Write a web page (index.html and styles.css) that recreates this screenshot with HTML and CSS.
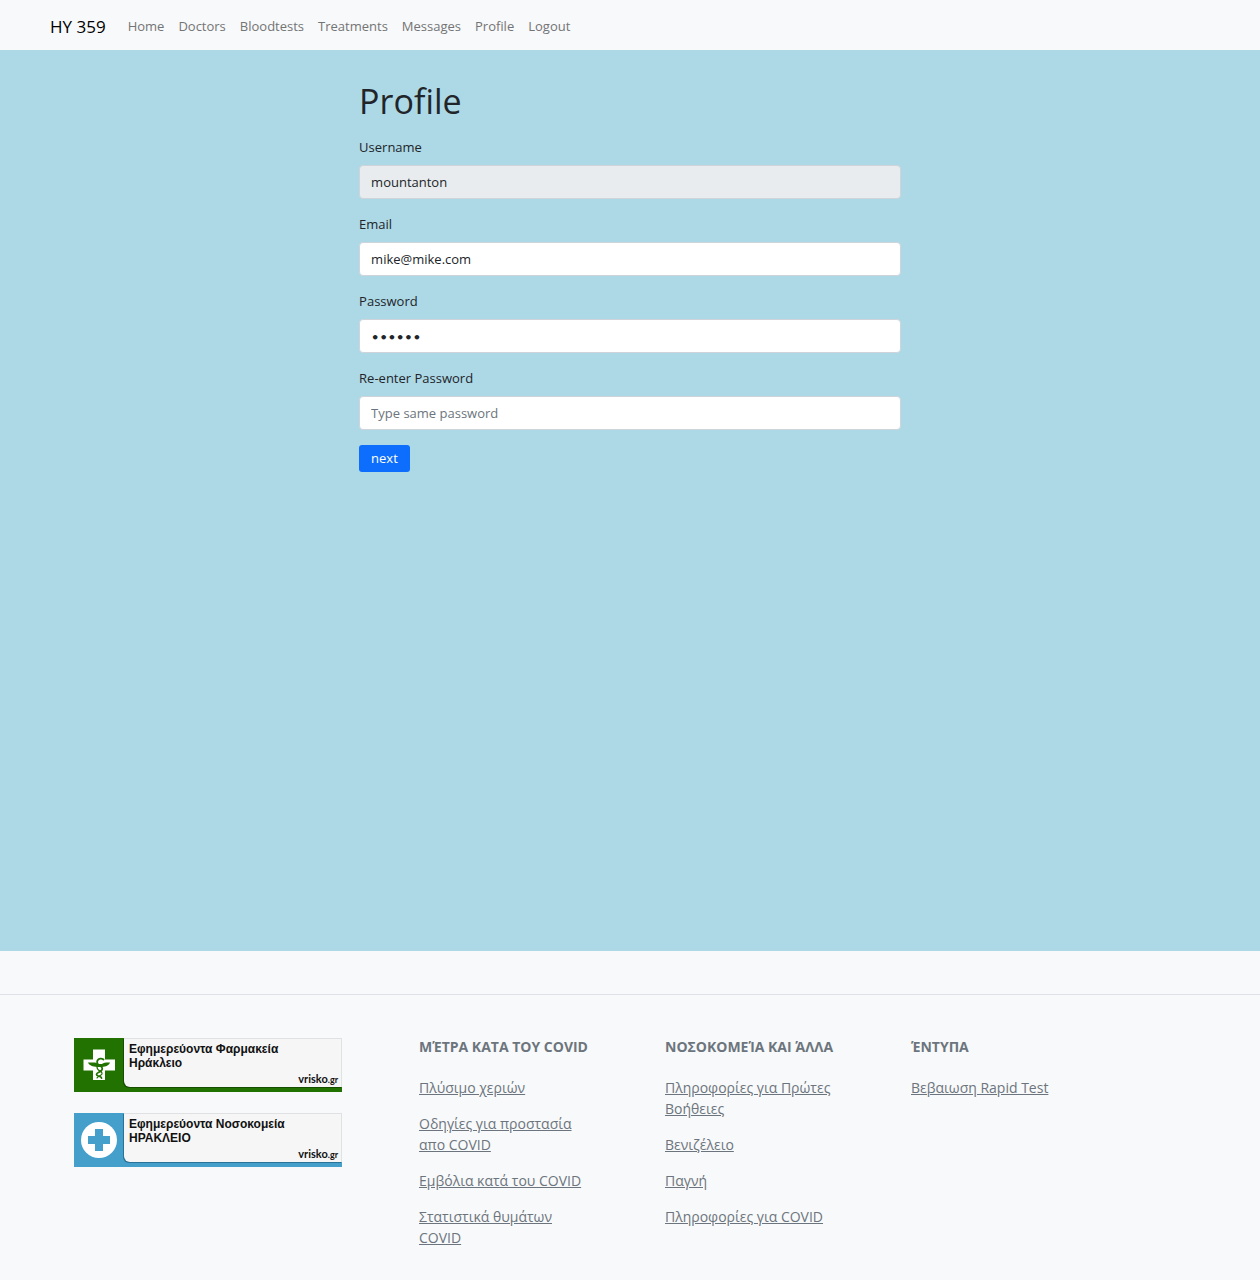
FILE: index.html
```html
<!DOCTYPE html>
<html lang="el">
<head>
  <meta charset="utf-8">
  <meta name="viewport" content="width=device-width, initial-scale=1">
  <title>Profile</title>
  <link rel="stylesheet" href="styles.css">
</head>
<body>
  <nav class="navbar">
    <a class="brand" href="#">HY 359</a>
    <ul class="nav-list">
      <li><a href="#">Home</a></li>
      <li><a href="#">Doctors</a></li>
      <li><a href="#">Bloodtests</a></li>
      <li><a href="#">Treatments</a></li>
      <li><a href="#">Messages</a></li>
      <li><a href="#">Profile</a></li>
      <li><a href="#">Logout</a></li>
    </ul>
  </nav>

  <main class="content">
    <form class="profile-form">
      <h1>Profile</h1>
      <div class="field">
        <label for="username">Username</label>
        <input id="username" type="text" value="mountanton" disabled>
      </div>
      <div class="field">
        <label for="email">Email</label>
        <input id="email" type="email" value="mike@mike.com">
      </div>
      <div class="field">
        <label for="password">Password</label>
        <input id="password" class="secret" type="password" value="secret">
      </div>
      <div class="field">
        <label for="password2">Re-enter Password</label>
        <input id="password2" type="password" placeholder="Type same password">
      </div>
      <button class="next" type="button">next</button>
    </form>
  </main>

  <footer class="footer">
    <div class="footer-grid">
      <div class="banners">
        <a class="banner pharmacy" href="#">
          <svg class="banner-icon" viewBox="0 0 50 49" aria-hidden="true">
            <path fill="#fff" d="M19 11.500h12v10h10v11h-10v9.500H19v-9.500H9.500v-11H19z"/>
            <path fill="#217200" d="M14 24.500h7c1 0 2 .5 3 1.500h4c2-1.500 5-1.800 8-1.500-1 3-4 4-8 4.500h-5c-4-.5-8-1.500-9-4.500z"/>
            <g fill="none" stroke="#217200" stroke-linecap="round">
              <path stroke-width="1.800" d="M29.500 21.500c-2-1.500-5-1-6 1s0 4 2 5 4 3 2 5-5 2-5 4 5 1.500 5 3.500"/>
              <path stroke-width="1.200" d="M23 29c0 2 1 3 3 4s3 3 1 4-3.500 1.500-4 3"/>
            </g>
          </svg>
          <span class="banner-body">
            <span>Εφημερεύοντα Φαρμακεία<br>Ηράκλειο</span>
            <span class="vrisko">vrisko<small>.gr</small></span>
          </span>
        </a>
        <a class="banner hospital" href="#">
          <svg class="banner-icon" viewBox="0 0 50 49" aria-hidden="true">
            <circle cx="25" cy="27" r="18" fill="#fff"/>
            <path fill="#449fcb" d="M21 16h8v7h7v8h-7v7h-8v-7h-7v-8h7z"/>
          </svg>
          <span class="banner-body">
            <span>Εφημερεύοντα Νοσοκομεία<br>ΗΡΑΚΛΕΙΟ</span>
            <span class="vrisko">vrisko<small>.gr</small></span>
          </span>
        </a>
      </div>
      <section class="links">
        <h2>ΜΈΤΡΑ ΚΑΤΑ ΤΟΥ COVID</h2>
        <p><a href="#">Πλύσιμο χεριών</a></p>
        <p><a href="#">Οδηγίες για προστασία απο COVID</a></p>
        <p><a href="#">Εμβόλια κατά του COVID</a></p>
        <p><a href="#">Στατιστικά θυμάτων COVID</a></p>
      </section>
      <section class="links">
        <h2>ΝΟΣΟΚΟΜΕΊΑ ΚΑΙ ΆΛΛΑ</h2>
        <p><a href="#">Πληροφορίες για Πρώτες Βοήθειες</a></p>
        <p><a href="#">Βενιζέλειο</a></p>
        <p><a href="#">Παγνή</a></p>
        <p><a href="#">Πληροφορίες για COVID</a></p>
      </section>
      <section class="links">
        <h2>ΈΝΤΥΠΑ</h2>
        <p><a href="#">Βεβαιωση Rapid Test</a></p>
      </section>
    </div>
  </footer>
</body>
</html>
```
FILE: styles.css
```css
* { box-sizing: border-box; }

body {
  margin: 0;
  background: #f8f9fa;
  color: #212529;
  font-family: "Open Sans", "Noto Sans", sans-serif;
  font-size: 13px;
  line-height: 21px;
}

.navbar {
  display: flex;
  align-items: center;
  gap: 22px;
  min-height: 50px;
  padding: 2px 50px 0;
}

.brand {
  color: #000;
  font-size: 17px;
  text-decoration: none;
}

.nav-list {
  display: flex;
  gap: 14px;
  margin: 0;
  padding: 0;
  list-style: none;
}

.nav-list a {
  color: #737475;
  text-decoration: none;
}

.content {
  min-height: 901px;
  padding: 30px 0;
  background: #add8e6;
}

.profile-form {
  width: 43%;
  margin: 0 auto;
}

.profile-form h1 {
  margin: 0 0 14px;
  font-size: 34px;
  font-weight: 400;
  line-height: 43px;
}

.field {
  display: flex;
  flex-direction: column;
  gap: 7px;
  margin-bottom: 15px;
}

.field input {
  width: 100%;
  height: 34px;
  padding: 0 11px;
  border: 1px solid #ced4da;
  border-radius: 4px;
  background: #fff;
  color: #212529;
  font: inherit;
}

.field input:disabled { background: #e9ecef; }

.field .secret {
  padding-top: 2px;
  font-family: "DejaVu Sans", sans-serif;
  font-weight: 700;
}

.field input::placeholder {
  color: #6c757d;
  opacity: 1;
}

.next {
  height: 27px;
  padding: 0 12px;
  border: 0;
  border-radius: 3px;
  background: #0d6efd;
  color: #fff;
  font: inherit;
}

.footer {
  margin-top: 43px;
  padding: 41px 0 16px;
  border-top: 1px solid #dee2e6;
}

.footer-grid {
  display: grid;
  grid-template-columns: 269fr 170fr 170fr 170fr;
  gap: 76px;
  padding: 0 179px 0 74px;
}

.banners {
  display: flex;
  flex-direction: column;
  gap: 21px;
  padding-top: 2px;
}

.banner {
  display: grid;
  grid-template-columns: 50px 1fr;
  width: 268px;
  height: 54px;
  padding-bottom: 5px;
  color: #111;
  font: bold 12px/14px "Liberation Sans", sans-serif;
  text-decoration: none;
}

.pharmacy { background: #217200; }
.hospital { background: #449fcb; }

.banner-icon {
  width: 50px;
  height: 49px;
}

.banner-body {
  display: flex;
  flex-direction: column;
  justify-content: space-between;
  padding: 3px 3px 0 5px;
  border: 1px solid #dfe1e3;
  border-width: 1px 1px 0 0;
  border-bottom-left-radius: 6px;
  background: #f6f6f6;
}

.pharmacy .banner-body { box-shadow: -1px 1px #164d00; }
.hospital .banner-body { box-shadow: -1px 1px #2b7298; }

.vrisko {
  align-self: flex-end;
  font: bold 11px/14px Lato, sans-serif;
}

.vrisko small { font-size: 9px; }

.links {
  color: #6c757d;
  font-size: 14px;
}

.links h2 {
  margin: 0 0 20px;
  font-size: 14px;
  font-weight: 700;
  line-height: 21px;
  white-space: nowrap;
}

.links p { margin: 0 0 15px; }

.links a {
  color: inherit;
  text-decoration: underline;
}
```
